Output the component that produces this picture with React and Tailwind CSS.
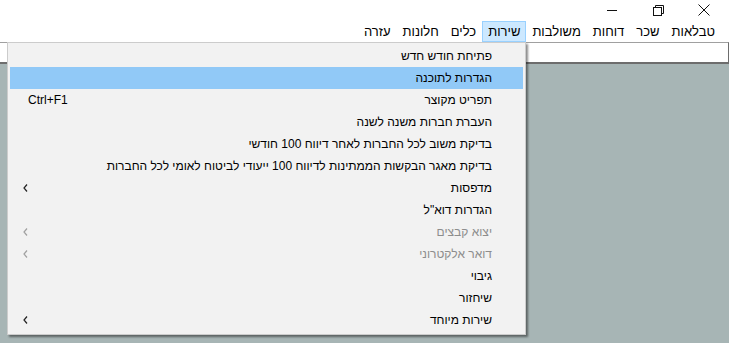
import React from "react";

const items = [
  { t: "פתיחת חודש חדש" },
  { t: "הגדרות לתוכנה", hl: true },
  { t: "תפריט מקוצר", sc: "Ctrl+F1" },
  { t: "העברת חברות משנה לשנה" },
  { t: "בדיקת משוב לכל החברות לאחר דיווח 100 חודשי" },
  { t: "בדיקת מאגר הבקשות הממתינות לדיווח 100 ייעודי לביטוח לאומי לכל החברות" },
  { t: "מדפסות", sub: true },
  { t: 'הגדרות דוא"ל' },
  { t: "יצוא קבצים", sub: true, dis: true },
  { t: "דואר אלקטרוני", sub: true, dis: true },
  { t: "גיבוי" },
  { t: "שיחזור" },
  { t: "שירות מיוחד", sub: true },
];

const bar = ["טבלאות", "שכר", "דוחות", "משולבות", "שירות", "כלים", "חלונות", "עזרה"];

function Chevron({ dis }) {
  return (
    <svg width="7" height="10" viewBox="0 0 7 10" className="shrink-0">
      <path d="M5 1.5 L2 5 L5 8.5" fill="none" stroke={dis ? "#a0a0a0" : "#222"} strokeWidth="1.2" />
    </svg>
  );
}

export default function App() {
  return (
    <div
      className="relative w-[729px] h-[343px] bg-[#a7b5b5] overflow-hidden flex flex-col"
      style={{ fontFamily: '"Liberation Sans", Arial, sans-serif' }}
    >
      {/* title bar */}
      <div className="h-[20px] bg-white flex justify-end items-center pr-[2px]">
        <div className="w-[46px] flex justify-center">
          <div className="w-[10px] h-[1px] bg-[#111]" />
        </div>
        <div className="w-[46px] flex justify-center">
          <svg width="11" height="11" viewBox="0 0 11 11">
            <rect x="0.5" y="2.5" width="8" height="8" fill="none" stroke="#111" />
            <path d="M2.5 2.5 V0.5 H10.5 V8.5 H8.5" fill="none" stroke="#111" />
          </svg>
        </div>
        <div className="w-[46px] flex justify-center">
          <svg width="12" height="12" viewBox="0 0 12 12">
            <path d="M0.5 0.5 L11.5 11.5 M11.5 0.5 L0.5 11.5" stroke="#111" strokeWidth="1" />
          </svg>
        </div>
      </div>
      {/* menu bar */}
      <div className="h-[22px] bg-white flex justify-start items-stretch pr-[8px] pt-[1px]" dir="rtl">
        {bar.map((b) => (
          <div
            key={b}
            className={
              "px-[5px] flex items-center text-[13px] text-black border " +
              (b === "שירות" ? "bg-[#cce8ff] border-[#99d1ff]" : "border-transparent")
            }
          >
            {b}
          </div>
        ))}
      </div>
      {/* toolbar box */}
      <div className="h-[22px] bg-white border-t border-t-[#a0a0a0] border-b-[2px] border-b-[#6d6d6d] border-r border-r-[#6d6d6d]" />
      <div className="flex-1" />

      {/* dropdown */}
      <div
        className="absolute left-[7px] top-[42px] w-[519px] h-[293px] bg-[#f2f2f2] border border-[#cccccc] pt-[2px] shadow-[2px_2px_2px_rgba(0,0,0,0.45)]"
        dir="rtl"
      >
        {items.map((it, i) => (
          <div
            key={i}
            className={
              "h-[22px] mx-[2px] flex items-center pr-[31px] pl-[11px] text-[12px] " +
              (it.hl ? "bg-[#91c9f7] " : "") +
              (it.dis ? "text-[#8d8d8d]" : "text-black")
            }
          >
            <span className="whitespace-nowrap">{it.t}</span>
            <span className="flex-1" />
            {it.sc && (
              <span dir="ltr" className="text-[12px] pl-[7px]">
                {it.sc}
              </span>
            )}
            {it.sub && (
              <span className="pl-[1px] flex items-center">
                <Chevron dis={it.dis} />
              </span>
            )}
          </div>
        ))}
      </div>
    </div>
  );
}
